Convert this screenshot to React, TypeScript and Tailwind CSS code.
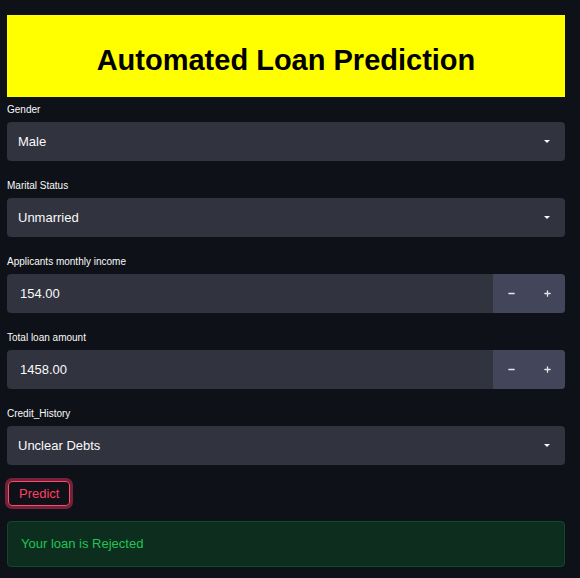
import { Minus, Plus } from 'lucide-react'

interface Field {
  label: string
  value: string
  kind: 'select' | 'number'
}

const fields: Field[] = [
  { label: 'Gender', value: 'Male', kind: 'select' },
  { label: 'Marital Status', value: 'Unmarried', kind: 'select' },
  { label: 'Applicants monthly income', value: '154.00', kind: 'number' },
  { label: 'Total loan amount', value: '1458.00', kind: 'number' },
  { label: 'Credit_History', value: 'Unclear Debts', kind: 'select' }
]

function Caret() {
  return (
    <svg width="8" height="5" viewBox="0 0 8 5" className="mr-[14px]">
      <path d="M1 1h6L4 4z" fill="#fafafa" />
    </svg>
  )
}

export default function App() {
  return (
    <div
      className="min-h-[578px] w-[580px] bg-[#0e1117] px-[7px] pt-[15px] text-[#fafafa]"
      style={{ fontFamily: '"Liberation Sans", Arial, sans-serif' }}
    >
      {/* Banner */}
      <div className="flex h-[82px] w-[558px] items-center justify-center bg-[#ffff00] pt-[9px]">
        <h1 className="text-[29px] font-bold text-black">Automated Loan Prediction</h1>
      </div>

      {/* Inputs */}
      {fields.map((field, i) => (
        <div key={field.label} className={i === 0 ? 'w-[558px]' : 'mt-[12px] w-[558px]'}>
          <div className="flex h-[25px] items-center text-[10px] text-[#fafafa]">{field.label}</div>
          {field.kind === 'select' ? (
            <div className="flex h-[39px] items-center justify-between rounded bg-[#31333f] pl-[11px]">
              <span className="text-[13px]">{field.value}</span>
              <Caret />
            </div>
          ) : (
            <div className="flex h-[39px] overflow-hidden rounded bg-[#31333f]">
              <div className="flex flex-1 items-center pl-[13px] text-[13px]">{field.value}</div>
              <div className="flex w-[36px] items-center justify-center bg-[#43465a]">
                <Minus size={9} strokeWidth={3.5} color="#e6e6ea" />
              </div>
              <div className="flex w-[36px] items-center justify-center bg-[#43465a]">
                <Plus size={9} strokeWidth={3.5} color="#e6e6ea" />
              </div>
            </div>
          )}
        </div>
      ))}

      {/* Predict */}
      <div className="mt-[16px] pl-[1px]">
        <button className="flex h-[25px] items-center rounded-[4px] border border-[#ff4b6b] px-[10px] text-[13px] text-[#ff3f63] ring-[3px] ring-[#a3284a]/70">
          Predict
        </button>
      </div>

      {/* Result */}
      <div className="mt-[15px] flex h-[46px] w-[558px] items-center rounded border border-[#11472a] bg-[#0d2e1f] pl-[13px] text-[13px] text-[#21c354]">
        Your loan is Rejected
      </div>
    </div>
  )
}
